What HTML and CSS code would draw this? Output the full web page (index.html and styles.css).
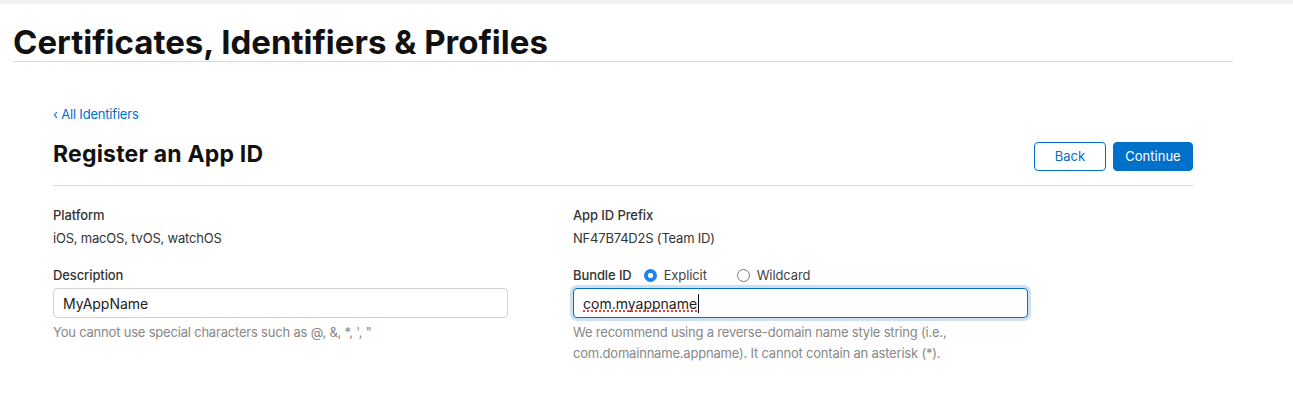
FILE: index.html
```html
<!DOCTYPE html>
<html lang="en">
<head>
    <meta charset="UTF-8">
    <meta name="viewport" content="width=device-width, initial-scale=1.0">
    <title>Register an App ID</title>
    <link rel="stylesheet" href="styles.css">
</head>
<body>
    <div class="top-strip"></div>

    <header class="page-header">
        <h1>Certificates, Identifiers &amp; Profiles</h1>
    </header>

    <main class="content">
        <a class="back-link" href="#">&lsaquo; All Identifiers</a>

        <div class="title-row">
            <h2>Register an App ID</h2>
            <div class="actions">
                <button type="button" class="btn btn-secondary">Back</button>
                <button type="button" class="btn btn-primary">Continue</button>
            </div>
        </div>

        <form class="form-grid">
            <div class="field">
                <div class="field-label">Platform</div>
                <div class="field-value">iOS, macOS, tvOS, watchOS</div>
            </div>
            <div class="field">
                <div class="field-label">App ID Prefix</div>
                <div class="field-value">NF47B74D2S (Team ID)</div>
            </div>

            <div class="field">
                <label class="field-label" for="description">Description</label>
                <input type="text" class="form-input" id="description" value="MyAppName">
                <p class="help">You cannot use special characters such as @, &amp;, *, ', "</p>
            </div>
            <div class="field">
                <div class="label-row">
                    <label class="field-label" for="bundle">Bundle ID</label>
                    <label class="radio"><input type="radio" name="kind" checked> Explicit</label>
                    <label class="radio"><input type="radio" name="kind"> Wildcard</label>
                </div>
                <div class="input-wrap">
                    <input type="text" class="form-input focused" id="bundle" value="com.myappname">
                    <span class="spell-mark"></span>
                    <span class="caret"></span>
                </div>
                <p class="help">We recommend using a reverse-domain name style string (i.e., com.domainname.appname). It cannot contain an asterisk (*).</p>
            </div>
        </form>
    </main>
</body>
</html>
```

FILE: styles.css
```css
* {
    margin: 0;
    padding: 0;
    box-sizing: border-box;
}
body {
    font-family: Inter, 'Liberation Sans', sans-serif;
    color: #333;
    background: #fff;
}
.top-strip {
    height: 4px;
    background: #f3f3f3;
}
.page-header {
    margin-left: 13px;
    width: 1220px;
    border-bottom: 1px solid #d9d9d9;
    padding-top: 21px;
    height: 58px;
}
.page-header h1 {
    font-size: 33px;
    font-weight: 700;
    color: #111;
    line-height: 34px;
}
.content {
    margin-left: 53px;
    width: 1140px;
    padding-top: 44px;
}
.back-link {
    display: block;
    font-size: 13px;
    line-height: 16px;
    letter-spacing: -0.2px;
    color: #0070c9;
    text-decoration: none;
}
.title-row {
    display: flex;
    align-items: center;
    justify-content: space-between;
    border-bottom: 1px solid #d9d9d9;
    height: 64px;
}
.title-row h2 {
    font-size: 23px;
    font-weight: 700;
    color: #111;
    letter-spacing: 0.2px;
}
.actions {
    display: flex;
    gap: 7px;
    margin-top: 5px;
}
.btn {
    height: 29px;
    border-radius: 4px;
    font-family: inherit;
    font-size: 13px;
    border: 1px solid #0070c9;
    cursor: pointer;
}
.btn-secondary {
    width: 72px;
    background: #fff;
    color: #0070c9;
}
.btn-primary {
    width: 80px;
    background: #0070c9;
    color: #fff;
}
.form-grid {
    display: grid;
    grid-template-columns: 455px 455px;
    column-gap: 65px;
    row-gap: 21px;
    padding-top: 21px;
}
.field-label {
    display: block;
    font-size: 13px;
    font-weight: 500;
    line-height: 16px;
    letter-spacing: -0.1px;
    color: #333;
}
.field-value {
    font-size: 13px;
    line-height: 16px;
    letter-spacing: -0.2px;
    margin-top: 7px;
    color: #333;
}
.label-row {
    display: flex;
    align-items: center;
    height: 16px;
}
.radio {
    display: flex;
    align-items: center;
    gap: 7px;
    font-size: 13px;
    letter-spacing: -0.1px;
    color: #444;
    width: 93px;
}
.label-row .field-label {
    margin-right: 12px;
}
.radio input {
    appearance: none;
    width: 13px;
    height: 13px;
    border-radius: 50%;
    border: 1px solid #777;
    background: #fff;
    margin: 0;
}
.radio input:checked {
    border: none;
    background: radial-gradient(circle, #fff 0 2.5px, #1a82fb 3px);
}
.input-wrap {
    position: relative;
    margin-top: 5px;
}
.form-input {
    display: block;
    width: 100%;
    height: 30px;
    padding: 0 9px;
    border: 1px solid #d2d2d2;
    border-radius: 4px;
    font-family: inherit;
    font-size: 14px;
    color: #222;
    outline: none;
}
.field > .form-input {
    margin-top: 5px;
}
.form-input.focused {
    border-color: #0070c9;
    box-shadow: 0 0 0 3px rgba(0, 112, 201, 0.2);
}
.spell-mark {
    position: absolute;
    left: 10px;
    top: 22px;
    width: 114px;
    border-bottom: 2px dotted #e0413a;
}
.caret {
    position: absolute;
    left: 125px;
    top: 6px;
    width: 1px;
    height: 19px;
    background: #111;
}
.help {
    font-size: 13px;
    line-height: 21px;
    letter-spacing: -0.2px;
    color: #888;
    margin-top: 4px;
}
```
